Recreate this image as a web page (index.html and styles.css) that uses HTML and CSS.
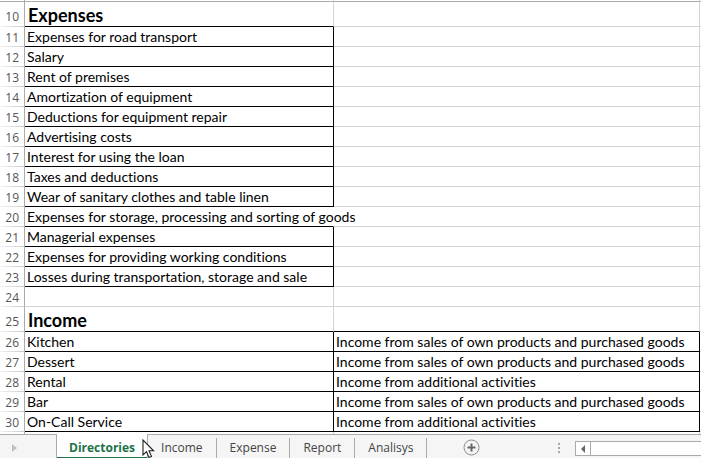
FILE: index.html
```html
<!DOCTYPE html>
<html lang="en">
<head>
<meta charset="utf-8">
<title>Directories</title>
<link rel="stylesheet" href="styles.css">
</head>
<body>
<main class="sheet">
<table class="grid">
<colgroup><col class="col-num"><col class="col-a"><col class="col-b"><col></colgroup>
<tbody>
<tr class="edge"><th></th><td></td><td></td><td></td></tr>
<tr class="title under"><th scope="row">10</th><td>Expenses</td><td></td><td></td></tr>
<tr class="boxed"><th scope="row">11</th><td>Expenses for road transport</td><td></td><td></td></tr>
<tr class="boxed"><th scope="row">12</th><td>Salary</td><td></td><td></td></tr>
<tr class="boxed"><th scope="row">13</th><td>Rent of premises</td><td></td><td></td></tr>
<tr class="boxed"><th scope="row">14</th><td>Amortization of equipment</td><td></td><td></td></tr>
<tr class="boxed"><th scope="row">15</th><td>Deductions for equipment repair</td><td></td><td></td></tr>
<tr class="boxed"><th scope="row">16</th><td>Advertising costs</td><td></td><td></td></tr>
<tr class="boxed"><th scope="row">17</th><td>Interest for using the loan</td><td></td><td></td></tr>
<tr class="boxed"><th scope="row">18</th><td>Taxes and deductions</td><td></td><td></td></tr>
<tr class="boxed"><th scope="row">19</th><td>Wear of sanitary clothes and table linen</td><td></td><td></td></tr>
<tr class="under spill"><th scope="row">20</th><td>Expenses for storage, processing and sorting of goods</td><td></td><td></td></tr>
<tr class="boxed"><th scope="row">21</th><td>Managerial expenses</td><td></td><td></td></tr>
<tr class="boxed"><th scope="row">22</th><td>Expenses for providing working conditions</td><td></td><td></td></tr>
<tr class="boxed"><th scope="row">23</th><td>Losses during transportation, storage and sale</td><td></td><td></td></tr>
<tr><th scope="row">24</th><td></td><td></td><td></td></tr>
<tr class="title under wide"><th scope="row">25</th><td>Income</td><td></td><td></td></tr>
<tr class="boxed wide"><th scope="row">26</th><td>Kitchen</td><td>Income from sales of own products and purchased goods</td><td></td></tr>
<tr class="boxed wide"><th scope="row">27</th><td>Dessert</td><td>Income from sales of own products and purchased goods</td><td></td></tr>
<tr class="boxed wide"><th scope="row">28</th><td>Rental</td><td>Income from additional activities</td><td></td></tr>
<tr class="boxed wide"><th scope="row">29</th><td>Bar</td><td>Income from sales of own products and purchased goods</td><td></td></tr>
<tr class="boxed wide"><th scope="row">30</th><td>On-Call Service</td><td>Income from additional activities</td><td></td></tr>
<tr><th></th><td></td><td></td><td></td></tr>
</tbody>
</table>
</main>
<footer class="bar">
<button class="next" aria-label="Next sheet"><svg width="5" height="8" viewBox="0 0 5 8"><path d="M0 0L5 4L0 8Z" fill="#c0c0c0"/></svg></button>
<nav class="tabs">
<button class="tab active">Directories<svg class="pointer" width="13" height="20" viewBox="0 0 13 20" aria-hidden="true"><path d="M1 1V16L4.500 12.700L7 18.500L9.500 17.400L7 11.800H11.600Z" fill="#fff" stroke="#222" stroke-width="1.100"/></svg></button>
<button class="tab">Income</button>
<button class="tab">Expense</button>
<button class="tab">Report</button>
<button class="tab">Analisys</button>
</nav>
<button class="add" aria-label="New sheet"><svg width="17" height="17" viewBox="0 0 17 17" fill="none"><circle cx="8.500" cy="8.500" r="7.500" stroke="#8a8a8a"/><path d="M8.500 4.500V12.500M4.500 8.500H12.500" stroke="#666" stroke-width="2"/></svg></button>
<svg class="grip" width="2" height="10" viewBox="0 0 2 10" fill="#a6a6a6"><path d="M0 0h2v2H0zM0 4h2v2H0zM0 8h2v2H0z"/></svg>
<div class="scroll"><button class="left" aria-label="Scroll left"><svg width="4" height="8" viewBox="0 0 4 8"><path d="M4 0V8L0 4Z" fill="#666"/></svg></button></div>
</footer>
</body>
</html>
```
FILE: styles.css
```css
* { box-sizing: border-box; }
body {
  margin: 0;
  height: 100vh;
  display: flex;
  flex-direction: column;
  background: #fff;
  color: #000;
  font-family: Lato, sans-serif;
  font-size: 14px;
  font-variant-ligatures: none;
}
button {
  border: 0;
  padding: 0;
  background: none;
  font: inherit;
  color: inherit;
}
svg { display: block; }

.sheet { flex: 1; min-height: 0; overflow: hidden; }
.grid {
  width: 100%;
  table-layout: fixed;
  border-collapse: separate;
  border-spacing: 0;
}
.col-num { width: 25px; }
.col-a { width: 309px; }
.col-b { width: 366px; }
.grid tr { height: 20px; }
.grid th, .grid td {
  padding: 1px 0 1px 2px;
  line-height: 17px;
  white-space: nowrap;
  text-align: left;
  border-right: 1px solid #d4d4d4;
  border-bottom: 1px solid #d4d4d4;
}
.grid td:last-child { padding: 0; border-right: 0; }
.grid th {
  padding: 2px 5px 0 0;
  text-align: right;
  font: 12px/17px "Open Sans", sans-serif;
  color: #555;
  border-right-color: #ababab;
  border-bottom-color: transparent;
  background: linear-gradient(to right, #f4f4f4, #c8c8c8) left bottom / 100% 1px no-repeat border-box;
}
.grid .edge { height: 2px; }
.grid .edge th, .grid .edge td {
  padding: 0;
  line-height: 0;
  border-bottom-color: #ababab;
}
.grid .title { height: 25px; }
.grid .title th { padding-top: 5px; line-height: 19px; }
.grid .title td { padding: 2px 0 0 3px; font-size: 18px; font-weight: bold; line-height: 22px; }
.grid .under td:nth-child(2),
.grid .boxed td:nth-child(2),
.grid .wide td:nth-child(3) { border-bottom-color: #000; }
.grid .boxed td:nth-child(2),
.grid .boxed.wide td:nth-child(3) { border-right-color: #000; }
.grid .spill td:nth-child(2) { border-right-color: transparent; }

.bar {
  flex: none;
  display: flex;
  height: 24px;
  background: #f5f5f5;
  box-shadow: inset 0 1px #ababab;
  color: #444;
  font: 12px/16px "Open Sans", sans-serif;
}
.next { width: 56px; padding: 3px 0 0 12px; }
.tabs { display: flex; }
.tab {
  position: relative;
  padding: 4px 14px 0 13px;
}
.tab:not(.active) {
  background: linear-gradient(#ababab, #ababab) right 0 top 4px / 1px 20px no-repeat;
}
.tab.active {
  padding: 3px 12px 0 12px;
  background: #fff;
  border: solid #ababab;
  border-width: 0 1px;
  box-shadow: inset 0 -1px #217346;
  color: #217346;
  font-weight: bold;
}
.pointer { position: absolute; left: 85px; top: 5px; z-index: 1; }
.add { padding: 3px 0 0; margin-left: 36px; }
.grip { margin: 9px 15px 0 auto; }
.scroll {
  width: 126px;
  height: 15px;
  margin-top: 7px;
  border: 1px solid #ababab;
  border-right: 0;
  background: #fff;
}
.left {
  display: grid;
  place-items: center;
  width: 15px;
  height: 13px;
  border-right: 1px solid #ababab;
}
```
